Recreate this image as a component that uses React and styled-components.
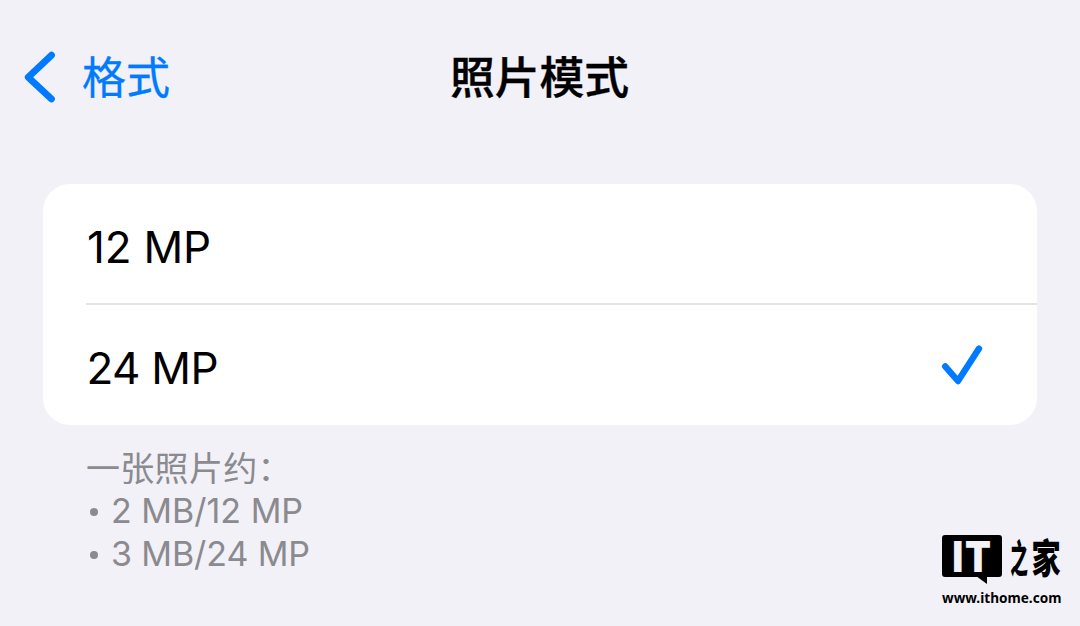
import styled, { createGlobalStyle } from "styled-components";

const modes = [
  { name: "12 MP", selected: false, indent: 1, tracking: -0.2 },
  { name: "24 MP", selected: true, indent: 0.5, tracking: -0.7 },
];

const App = () => {
  return (
    <Page>
      <GlobalStyle />
      <Header>
        <Back>
          <Chevron viewBox="0 0 34 54">
            <path d="M28.5 5.2 L5.2 27.2 L28.5 49" />
          </Chevron>
          <BackLabel>格式</BackLabel>
        </Back>
        <Title>照片模式</Title>
      </Header>
      <Card>
        {modes.map((mode) => (
          <Row key={mode.name}>
            <RowLabel $indent={mode.indent} $tracking={mode.tracking}>
              {mode.name}
            </RowLabel>
            {mode.selected && (
              <Check viewBox="0 0 42 42">
                <path d="M4.2 22.3 L17 37 L38 4.6" />
              </Check>
            )}
          </Row>
        ))}
      </Card>
      <Bottom>
        <Note>
          <NoteTitle>一张照片约：</NoteTitle>
          <NoteItem>2 MB/12 MP</NoteItem>
          <NoteItem $tracking={-0.1}>3 MB/24 MP</NoteItem>
        </Note>
        <Brand>
          <Logo>
            <Bubble>
              <BubbleText>IT</BubbleText>
            </Bubble>
            <Brush>
              <Stroke $width={18} $scale="0.68, 1.45">
                之
              </Stroke>
              <Stroke $width={30} $scale="1.12, 1.55">
                家
              </Stroke>
            </Brush>
          </Logo>
          <Url>www.ithome.com</Url>
        </Brand>
      </Bottom>
    </Page>
  );
};

export default App;

const GlobalStyle = createGlobalStyle`
  body {
    margin: 0;
    background: #f2f1f8;
  }
`;

const Page = styled.div`
  width: 1080px;
  height: 626px;
  overflow: hidden;
  box-sizing: border-box;
  background: #f2f1f8;
  font-family: Inter, "Noto Sans CJK SC", sans-serif;
  color: #000;
`;

const Header = styled.header`
  display: grid;
  grid-template-columns: 1fr auto 1fr;
  align-items: center;
  height: 154px;
  box-sizing: border-box;
  padding: 0 24px 0 23px;
`;
const Back = styled.div`
  display: flex;
  align-items: center;
  color: #007aff;
`;
const Chevron = styled.svg`
  width: 34px;
  height: 54px;
  margin-right: 25px;
  fill: none;
  stroke: #007aff;
  stroke-width: 6.8;
  stroke-linecap: round;
  stroke-linejoin: round;
`;
const BackLabel = styled.span`
  padding-bottom: 4px;
  font-family: "Noto Sans CJK SC", sans-serif;
  font-size: 44px;
  line-height: 60px;
  -webkit-text-stroke: 0.3px #007aff;
`;
const Title = styled.h1`
  margin: 0;
  padding-bottom: 4px;
  font-family: "Noto Sans CJK SC", sans-serif;
  font-size: 44.8px;
  font-weight: 500;
  line-height: 60px;
  -webkit-text-stroke: 0.4px #000;
`;

const Card = styled.div`
  margin: 29.5px 43px 0;
  height: 241.5px;
  background: #fff;
  border-radius: 27px;
`;
const Row = styled.div`
  display: flex;
  align-items: center;
  justify-content: space-between;
  height: 119.5px;
  box-sizing: border-box;
  margin-left: 43px;
  padding-right: 54px;
  padding-top: 7px;

  & + & {
    height: 122px;
    padding-top: 5px;
    border-top: 2px solid #e5e5e6;
  }
`;
const RowLabel = styled.span`
  margin-left: ${(props) => props.$indent}px;
  font-size: 44px;
  line-height: 54px;
  letter-spacing: ${(props) => props.$tracking}px;
`;
const Check = styled.svg`
  width: 42px;
  height: 42px;
  margin-bottom: 6px;
  fill: none;
  stroke: #007aff;
  stroke-width: 6.4;
  stroke-linecap: round;
  stroke-linejoin: round;
`;

const Bottom = styled.div`
  display: flex;
  justify-content: space-between;
  padding: 20px 18px 0 87px;
`;
const Note = styled.div`
  padding-top: 1px;
  color: #8a8a8f;
  font-size: 34px;
  line-height: 43px;
`;
const NoteTitle = styled.div`
  margin: -1px 0 1px -1px;
  font-family: "Noto Sans CJK SC", sans-serif;
  letter-spacing: 0.3px;
`;
const NoteItem = styled.div`
  display: flex;
  align-items: center;
  letter-spacing: ${(props) => props.$tracking || 0}px;

  &:before {
    content: "";
    width: 8px;
    height: 8px;
    margin: 2px 13px 0 3px;
    border-radius: 50%;
    background: #8a8a8f;
  }
`;

const Brand = styled.div`
  width: 120px;
  padding-top: 90px;
`;
const Logo = styled.div`
  display: flex;
  align-items: center;
  height: 42px;
`;
const Bubble = styled.div`
  position: relative;
  display: flex;
  align-items: center;
  justify-content: center;
  width: 60px;
  height: 42px;
  border-radius: 3px;
  background: #000;

  /* speech bubble tail */
  &:after {
    content: "";
    position: absolute;
    left: 34px;
    top: 41px;
    width: 11px;
    height: 8px;
    background: #000;
    clip-path: polygon(0 0, 100% 0, 100% 100%);
  }
`;
const BubbleText = styled.span`
  padding: 1px 0 0 2px;
  font-weight: 900;
  font-size: 42px;
  line-height: 42px;
  letter-spacing: 2px;
  color: #f2f1f8;
  transform: scaleX(0.9);
`;
const Brush = styled.span`
  display: flex;
  gap: 3px;
  margin-left: 8px;
  font-family: "Noto Sans CJK SC", sans-serif;
  font-weight: 900;
  font-size: 26px;
  line-height: 42px;
`;
const Stroke = styled.span`
  display: flex;
  justify-content: center;
  width: ${(props) => props.$width}px;
  transform: scale(${(props) => props.$scale});
`;
const Url = styled.div`
  margin-top: 11px;
  font-family: "Noto Sans", sans-serif;
  font-weight: 700;
  font-size: 13.6px;
  line-height: 20px;
  white-space: nowrap;
`;
